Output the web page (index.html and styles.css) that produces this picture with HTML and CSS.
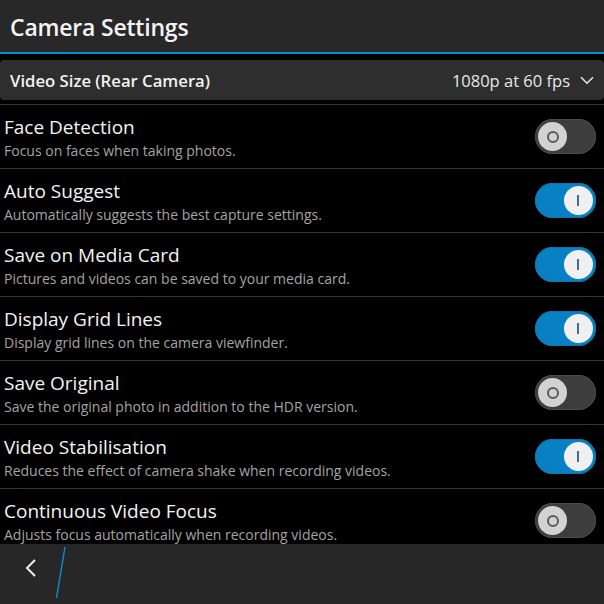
FILE: index.html
```html
<!DOCTYPE html>
<html lang="en">
<head>
  <meta charset="UTF-8">
  <title>Camera Settings</title>
  <link rel="stylesheet" href="styles.css">
</head>
<body>

  <header class="title-bar">
    <h1>Camera Settings</h1>
  </header>

  <div class="dropdown">
    <span class="dropdown-label">Video Size (Rear Camera)</span>
    <span class="dropdown-value">1080p at 60 fps</span>
    <svg class="chevron-down" width="14" height="9" viewBox="0 0 14 9">
      <path d="M1 1.2 L7 7.2 L13 1.2" fill="none" stroke="#e6e6e6" stroke-width="1.6"/>
    </svg>
  </div>

  <div class="settings-list">
    <div class="setting">
      <div class="setting-text">
        <div class="setting-title">Face Detection</div>
        <div class="setting-desc">Focus on faces when taking photos.</div>
      </div>
      <div class="toggle"><span class="knob"></span></div>
    </div>
    <div class="setting">
      <div class="setting-text">
        <div class="setting-title">Auto Suggest</div>
        <div class="setting-desc">Automatically suggests the best capture settings.</div>
      </div>
      <div class="toggle on"><span class="knob"></span></div>
    </div>
    <div class="setting">
      <div class="setting-text">
        <div class="setting-title">Save on Media Card</div>
        <div class="setting-desc">Pictures and videos can be saved to your media card.</div>
      </div>
      <div class="toggle on"><span class="knob"></span></div>
    </div>
    <div class="setting">
      <div class="setting-text">
        <div class="setting-title">Display Grid Lines</div>
        <div class="setting-desc">Display grid lines on the camera viewfinder.</div>
      </div>
      <div class="toggle on"><span class="knob"></span></div>
    </div>
    <div class="setting">
      <div class="setting-text">
        <div class="setting-title">Save Original</div>
        <div class="setting-desc">Save the original photo in addition to the HDR version.</div>
      </div>
      <div class="toggle"><span class="knob"></span></div>
    </div>
    <div class="setting">
      <div class="setting-text">
        <div class="setting-title">Video Stabilisation</div>
        <div class="setting-desc">Reduces the effect of camera shake when recording videos.</div>
      </div>
      <div class="toggle on"><span class="knob"></span></div>
    </div>
    <div class="setting">
      <div class="setting-text">
        <div class="setting-title">Continuous Video Focus</div>
        <div class="setting-desc">Adjusts focus automatically when recording videos.</div>
      </div>
      <div class="toggle"><span class="knob"></span></div>
    </div>
  </div>

  <footer class="action-bar">
    <svg width="100" height="60" viewBox="0 0 100 60">
      <path d="M35 16 L27 24 L35 32" fill="none" stroke="#f0f0f0" stroke-width="2"/>
      <line x1="65" y1="3" x2="56.5" y2="54" stroke="#0a8fd6" stroke-width="1.4"/>
    </svg>
  </footer>

</body>
</html>
```

FILE: styles.css
```css
html, body {
  margin: 0;
  padding: 0;
  background: #000;
  height: 604px;
  overflow: hidden;
}

body {
  font-family: 'Open Sans', 'Liberation Sans', sans-serif;
  color: #f2f2f2;
  display: flex;
  flex-direction: column;
}

.title-bar {
  height: 52px;
  box-sizing: border-box;
  padding: 2px 0 0 10px;
  background: #282828;
  border-bottom: 2px solid #0a8ad0;
  display: flex;
  align-items: center;
  flex-shrink: 0;
  height: 54px;
}

h1 {
  margin: 0;
  font-size: 23px;
  font-weight: 600;
  color: #f4f4f4;
  letter-spacing: -0.2px;
}

.dropdown {
  margin-top: 6px;
  height: 40px;
  background: #2e2e2e;
  border-radius: 4px;
  display: flex;
  align-items: center;
  padding: 0 10px;
  flex-shrink: 0;
}

.dropdown-label {
  font-size: 16.7px;
  font-weight: 600;
  flex: 1;
}

.dropdown-value {
  font-size: 16.5px;
  color: #e8e8e8;
  margin-right: 10px;
}

.chevron-down {
  margin-right: 0;
}

.settings-list {
  margin-top: 4px;
  border-top: 1px solid #363636;
  flex: 1;
  overflow: hidden;
}

.setting {
  height: 63px;
  border-bottom: 1px solid #363636;
  display: flex;
  align-items: center;
  padding: 0 8px 0 4px;
}

.setting-text {
  flex: 1;
  align-self: flex-start;
  padding-top: 9px;
}

.setting-title {
  font-size: 19px;
  line-height: 26px;
  color: #f4f4f4;
}

.setting-desc {
  margin-top: 1px;
  font-size: 14px;
  line-height: 20px;
  color: #a4a4a4;
}

.toggle {
  width: 61px;
  height: 35px;
  border-radius: 18px;
  background: #3d3d3d;
  box-shadow: inset 0 0 0 1px #4a4a4a;
  position: relative;
}

.knob {
  position: absolute;
  top: 3px;
  left: 3px;
  width: 29px;
  height: 29px;
  border-radius: 50%;
  background: #d2d2d2;
}

.knob::after {
  content: '';
  position: absolute;
  left: 9px;
  top: 9px;
  width: 8px;
  height: 8px;
  border: 2px solid #5a5a5a;
  border-radius: 50%;
}

.toggle.on {
  background: #0a80c4;
  box-shadow: inset 0 0 0 1px #0b74b0;
}

.toggle.on .knob {
  left: 29px;
  background: #f0f0f0;
}

.toggle.on .knob::after {
  left: 13px;
  top: 9px;
  width: 2px;
  height: 11px;
  border: none;
  border-radius: 0;
  background: #3a6f95;
}

.action-bar {
  height: 60px;
  background: #272727;
  flex-shrink: 0;
}

.action-bar svg {
  display: block;
}
```
